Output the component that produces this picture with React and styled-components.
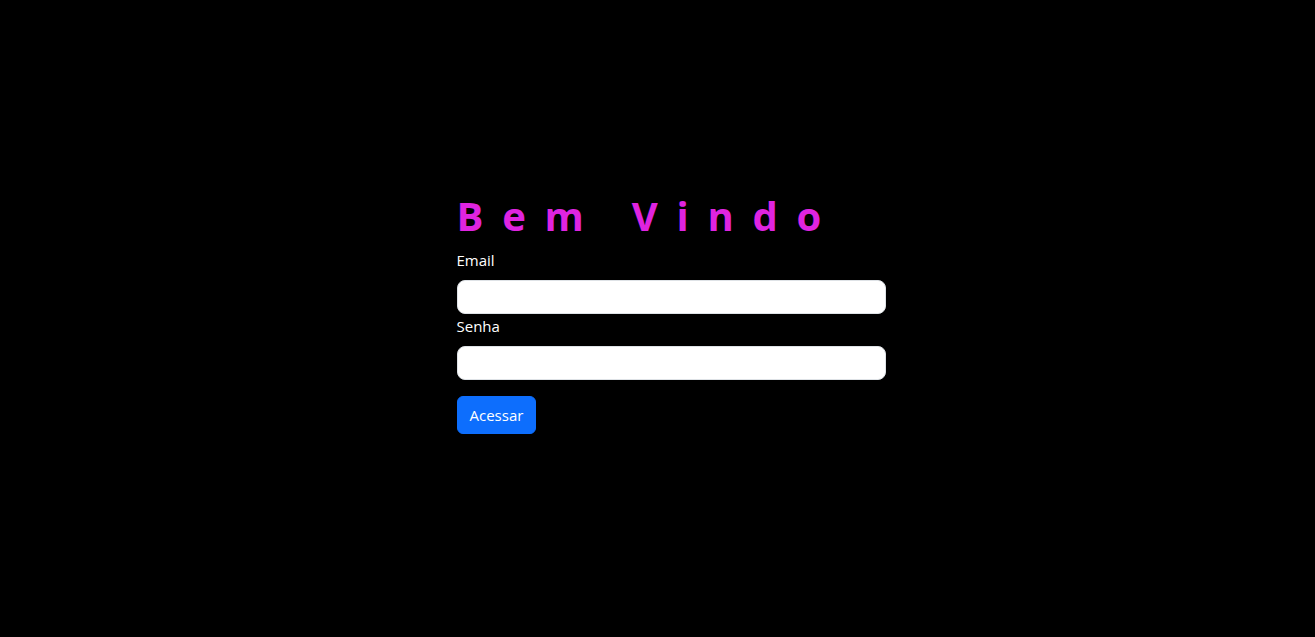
import styled, { createGlobalStyle } from "styled-components";

const GlobalStyle = createGlobalStyle`
	* {
		box-sizing: border-box;
	}
	body {
		margin: 0;
		background: #000000;
		font-family: "Open Sans", "Noto Sans", sans-serif;
		color: #ffffff;
	}
`;

export default function App() {
	return (
		<>
			<GlobalStyle />
			<Page>
				<Form onSubmit={(e) => e.preventDefault()}>
					<Title>Bem Vindo</Title>
					<Label htmlFor="email">Email</Label>
					<Input id="email" type="email" />
					<Label htmlFor="senha">Senha</Label>
					<Input id="senha" type="password" />
					<Button type="submit">Acessar</Button>
				</Form>
			</Page>
		</>
	);
}

const Page = styled.main`
	min-height: 637px;
	display: flex;
	justify-content: center;
	align-items: center;
	padding-bottom: 12px;
`;

const Form = styled.form`
	width: 402px;
	display: flex;
	flex-direction: column;
	align-items: flex-start;
`;

const Title = styled.h1`
	margin: 0 0 8px 0;
	font-size: 40px;
	line-height: 48px;
	font-weight: 700;
	letter-spacing: 18.75px;
	color: #df24e0;
`;

const Label = styled.label`
	font-size: 15px;
	line-height: 24px;
	margin-bottom: 8px;
	color: #ffffff;
`;

const Input = styled.input`
	width: 429px;
	height: 34px;
	border: 1px solid #dee2e6;
	border-radius: 8px;
	background: #ffffff;
	padding: 6px 12px;
	font-size: 16px;
	outline: none;
`;

const Button = styled.button`
	margin-top: 16px;
	height: 38px;
	padding: 6px 12px;
	border: 1px solid #0d6efd;
	border-radius: 6px;
	background: #0d6efd;
	color: #ffffff;
	font-family: "Open Sans", "Noto Sans", sans-serif;
	font-size: 15px;
	line-height: 24px;
	cursor: pointer;

	&:hover {
		filter: brightness(1.1);
	}
`;
